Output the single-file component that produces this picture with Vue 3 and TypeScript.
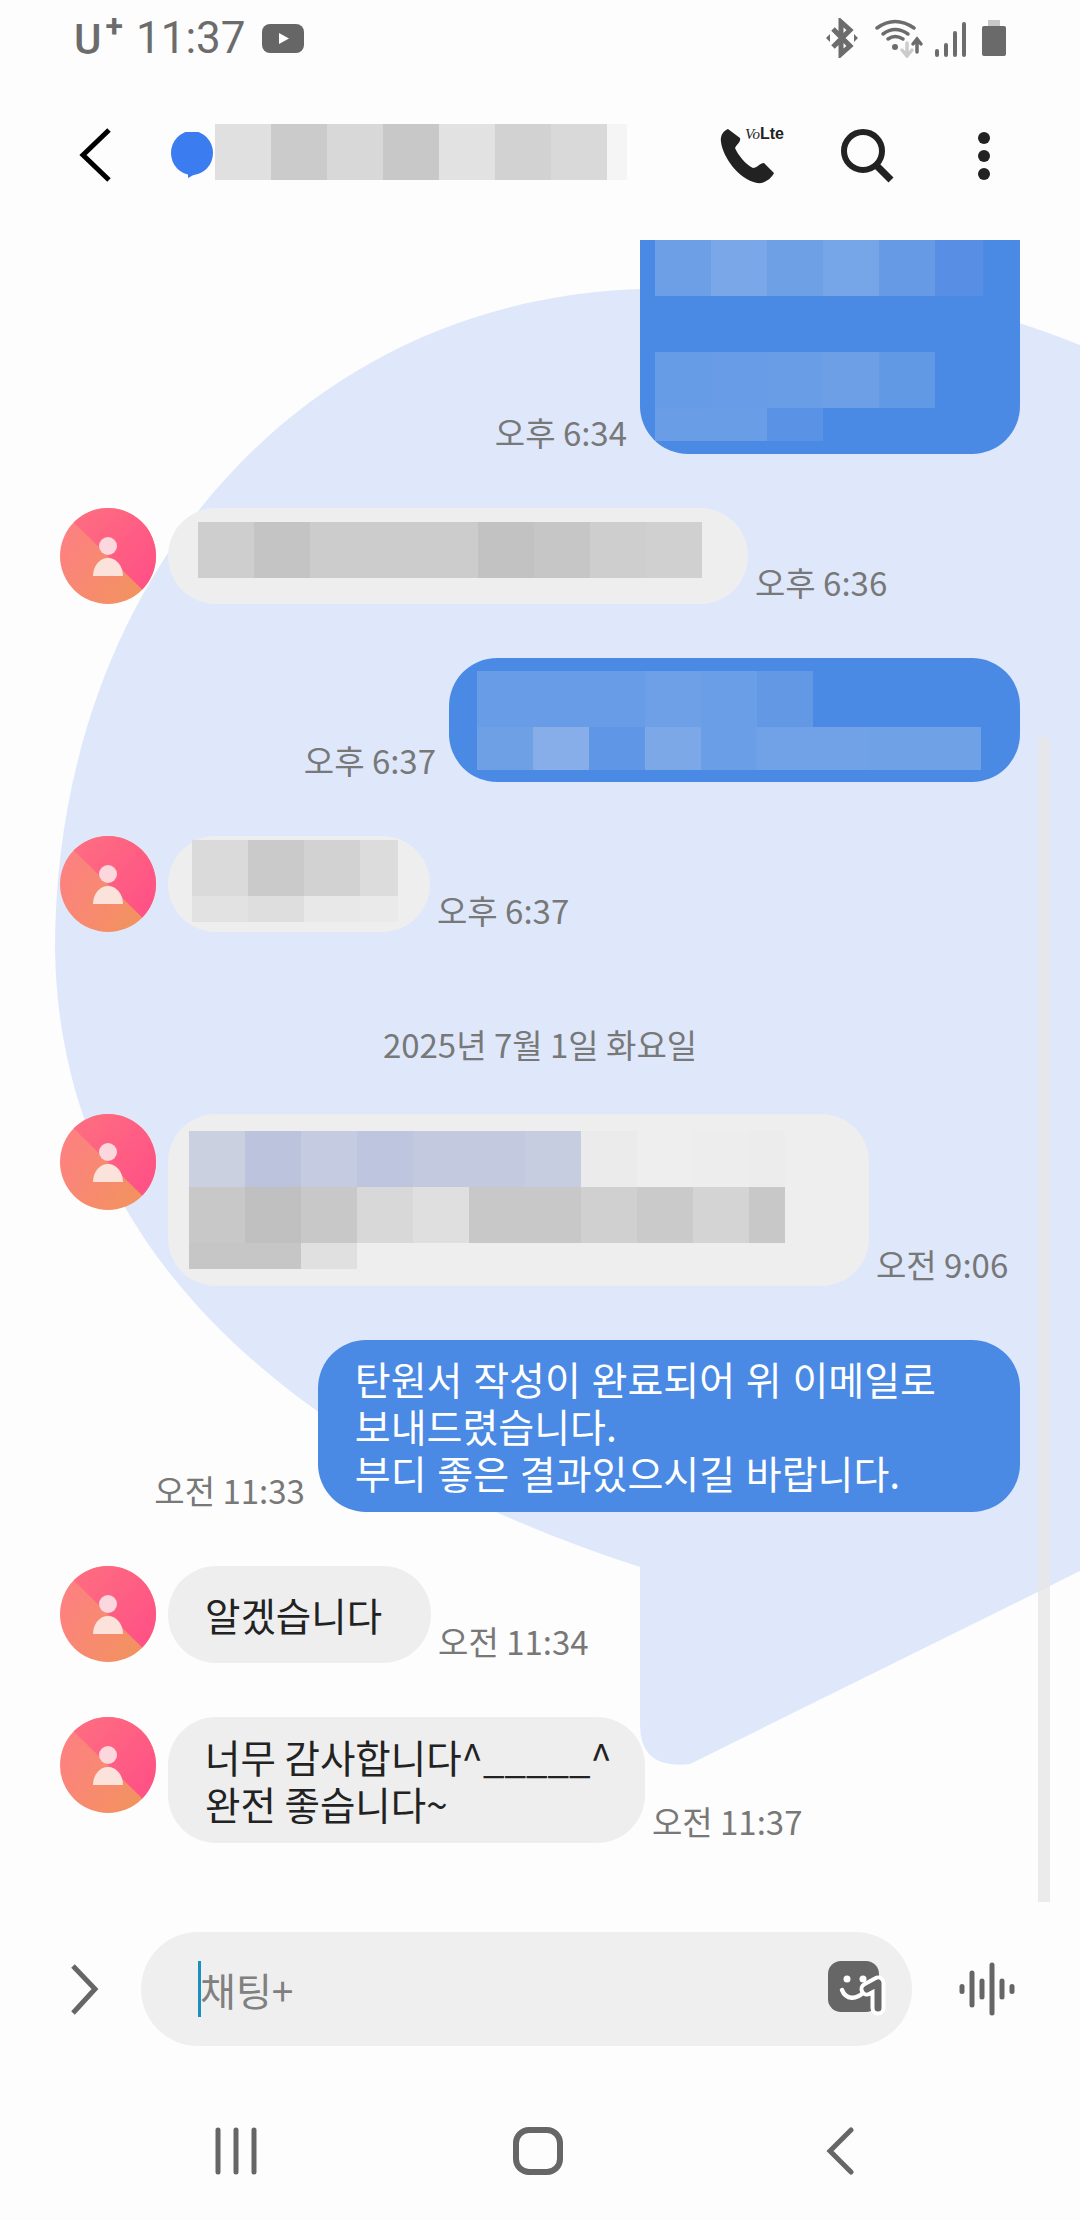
<script setup lang="ts">
type Cell = { c: string; w: number };
type Row = { h: number; cells: Cell[] };
type Msg = {
  side: "in" | "out";
  time: string;
  pad?: number[];
  rows?: Row[];
  text?: string;
  cls?: string;
};

// 모자이크 한 줄: 칸은 56px, 마지막 칸만 폭이 다를 수 있음
function row(h: number, colors: string[], lastW = 56): Row {
  return {
    h,
    cells: colors.map((c, i) => ({ c, w: i === colors.length - 1 ? lastW : 56 })),
  };
}

const titleCells = row(56, ["#e0e0e0", "#cbcbcb", "#d8d8d8", "#c8c8c8", "#e2e2e2", "#d2d2d2", "#d9d9d9", "#f5f5f5"], 20);

const messages: Msg[] = [
  {
    side: "out",
    time: "오후 6:34",
    cls: "first",
    pad: [60, 37, 13, 15],
    rows: [
      row(56, ["#6d9fe6", "#7aa7e7", "#6ea0e6", "#76a6e7", "#679ae5", "#588fe4"], 48),
      row(56, ["#4a8ae4"]),
      row(56, ["#669be6", "#689ce6", "#699de6", "#6d9fe6", "#6299e5"]),
      row(33, ["#699de6", "#699de6", "#5a93e5"]),
    ],
  },
  {
    side: "in",
    time: "오후 6:36",
    pad: [14, 46, 26, 30],
    rows: [row(56, ["#cecece", "#c4c4c4", "#cccccc", "#cccccc", "#cccccc", "#c2c2c2", "#c6c6c6", "#cecece", "#d0d0d0"])],
  },
  {
    side: "out",
    time: "오후 6:37",
    pad: [13, 39, 12, 28],
    rows: [
      row(56, ["#689ce6", "#689ce6", "#689ce6", "#6ea0e7", "#6a9ee6", "#6398e5"]),
      row(43, ["#6ea0e6", "#87aee9", "#5f96e6", "#7ca8e8", "#6a9ee6", "#71a2e7", "#71a2e7", "#6fa1e7", "#6fa1e7"]),
    ],
  },
  {
    side: "in",
    time: "오후 6:37",
    pad: [4, 32, 10, 24],
    rows: [
      row(56, ["#dadada", "#cacaca", "#d2d2d2", "#dcdcdc"], 38),
      row(26, ["#e2e2e2", "#dedede", "#e8e8e8", "#eaeaea"], 38),
    ],
  },
];

const laterMessages: Msg[] = [
  {
    side: "in",
    time: "오전 9:06",
    pad: [17, 84, 17, 21],
    rows: [
      row(56, ["#cbd0e0", "#bcc3dd", "#c5cbe0", "#bdc5df", "#c3cae0", "#c3cae0", "#c6cde0", "#ebebeb", "#eeeeee", "#ededed", "#ececec"], 36),
      row(56, ["#c8c8c8", "#c0c0c0", "#c8c8c8", "#d8d8d8", "#dfdfdf", "#c8c8c8", "#c8c8c8", "#d0d0d0", "#cacaca", "#d4d4d4", "#c8c8c8"], 36),
      row(26, ["#c6c6c6", "#c6c6c6", "#e0e0e0"]),
    ],
  },
  {
    side: "out",
    time: "오전 11:33",
    pad: [15, 84, 16, 37],
    text: "탄원서 작성이 완료되어 위 이메일로\n보내드렸습니다.\n부디 좋은 결과있으시길 바랍니다.",
  },
  { side: "in", time: "오전 11:34", pad: [25, 49, 25, 37], text: "알겠습니다" },
  {
    side: "in",
    time: "오전 11:37",
    pad: [16, 33, 16, 37],
    text: "너무 감사합니다^_____^\n완전 좋습니다~",
  },
];

const voiceBars = [
  { x: 3, h: 10 },
  { x: 13, h: 37 },
  { x: 23, h: 21 },
  { x: 33, h: 53 },
  { x: 43, h: 21 },
  { x: 53, h: 10 },
];

function padStyle(m: Msg) {
  const p = m.pad ?? [0, 0, 0, 0];
  return { padding: `${p[0]}px ${p[1]}px ${p[2]}px ${p[3]}px` };
}
</script>

<template>
  <div class="screen">
    <!-- 채팅 뒤의 말풍선 모양 배경 -->
    <svg class="backdrop" width="1080" height="2220" viewBox="0 0 1080 2220">
      <path
        d="M55 950 C55 580 300 300 640 289 C720 272 900 272 1080 345 L1080 1571 L690 1764 Q640 1770 640 1725 L640 1567 C340 1470 60 1280 55 950 Z"
        fill="#dfe8fb"
      />
    </svg>
    <div class="scrollbar"></div>

    <header class="status">
      <span class="carrier">U<b>+</b></span>
      <span class="clock">11:37</span>
      <svg class="yt" width="42" height="29" viewBox="0 0 42 29">
        <rect width="42" height="29" rx="8" fill="#666" />
        <path d="M17 9 L27 14.500 L17 20 Z" fill="#fff" />
      </svg>
      <div class="status-right">
        <svg width="34" height="40" viewBox="0 0 34 40" fill="none" stroke="#6c6c6c" stroke-width="5">
          <path d="M8 11 L25 28 L16 36 V4 L25 12 L8 29" />
          <path d="M1 20 L5 16 V24 Z M33 20 L29 16 V24 Z" fill="#6c6c6c" stroke="none" />
        </svg>
        <svg class="wifi" width="49" height="40" viewBox="0 0 49 40" fill="none" stroke="#6c6c6c" stroke-linecap="round">
          <path d="M2 10 Q20 -3 39 10" stroke-width="3.500" />
          <path d="M8 16 Q20 7 33 16" stroke-width="3.500" />
          <path d="M13 21 Q20 16 28 21" stroke-width="3.500" />
          <circle cx="20" cy="29" r="3" fill="#6c6c6c" stroke="none" />
          <path d="M32 25 V37 M27 32 L32 38 L37 32" stroke="#cccccc" stroke-width="3.500" />
          <path d="M42 21 V34 M38 26 L42 21 L46 26" stroke-width="3.500" />
        </svg>
        <svg class="signal" width="32" height="40" viewBox="0 0 32 40" fill="none" stroke="#6c6c6c" stroke-width="4" stroke-linecap="round">
          <path d="M2 33 V37 M11 27 V37 M20 15 V37 M29 6 V37" />
        </svg>
        <svg class="battery" width="24" height="40" viewBox="0 0 24 40">
          <rect x="6" y="2" width="12" height="7" fill="#c8c8c8" />
          <rect y="8" width="24" height="30" rx="2" fill="#6a6a6a" />
        </svg>
      </div>
    </header>

    <div class="appbar">
      <svg class="back" width="36" height="56" viewBox="0 0 36 56" fill="none" stroke="#000" stroke-width="5">
        <path d="M31 3 L5 28 L31 53" />
      </svg>
      <svg class="dot" width="44" height="46" viewBox="0 0 44 46">
        <ellipse cx="21" cy="21" rx="21" ry="22" fill="#3b7cf0" />
        <path d="M17 40 L17 46 L30 39 Z" fill="#3b7cf0" />
      </svg>
      <div class="mosaic-row">
        <i v-for="(cell, i) in titleCells.cells" :key="i" :style="{ width: cell.w + 'px', height: titleCells.h + 'px', background: cell.c }"></i>
      </div>
      <div class="call">
        <svg width="60" height="60" viewBox="0 0 60 60">
          <path
            d="M10 2 C5 4 2 9 3 15 C5 30 20 52 39 56 C46 57 53 52 56 46 L46 36 C42 36 39 41 35 41 C28 38 20 28 17 21 C19 17 23 15 22 11 Z"
            fill="#222"
          />
        </svg>
        <span class="volte"><em>Vo</em><b>Lte</b></span>
      </div>
      <svg class="search" width="60" height="64" viewBox="0 0 60 64" fill="none" stroke="#222" stroke-width="6">
        <circle cx="26" cy="24" r="19" />
        <path d="M39 38 L54 53" stroke-width="7" />
      </svg>
      <svg class="more" width="14" height="50" viewBox="0 0 14 50" fill="#222">
        <circle cx="7" cy="7" r="6" />
        <circle cx="7" cy="25" r="6" />
        <circle cx="7" cy="43" r="6" />
      </svg>
    </div>

    <main class="list">
      <template v-for="(group, g) in [messages, laterMessages]" :key="g">
        <div v-if="g === 1" class="date">2025년 7월 1일 화요일</div>
        <div v-for="(m, i) in group" :key="i" class="msg" :class="[m.side, m.cls]">
          <svg v-if="m.side === 'in'" class="avatar" width="96" height="96" viewBox="0 0 96 96">
            <defs>
              <linearGradient id="avTop" x1="0.1" y1="0" x2="1" y2="0.8">
                <stop offset="0" stop-color="#fe7080" />
                <stop offset="1" stop-color="#ff4f86" />
              </linearGradient>
              <linearGradient id="avBottom" x1="0" y1="0.2" x2="1" y2="0.9">
                <stop offset="0" stop-color="#fe7f84" />
                <stop offset="1" stop-color="#f0955a" />
              </linearGradient>
              <clipPath id="avClip"><circle cx="48" cy="48" r="48" /></clipPath>
            </defs>
            <g clip-path="url(#avClip)">
              <rect width="96" height="96" fill="url(#avBottom)" />
              <path d="M0 1 L96 95 V0 H0 Z" fill="url(#avTop)" />
            </g>
            <circle cx="48" cy="38" r="9" fill="#fcd7de" />
            <path d="M33 68 A15 18 0 0 1 63 68 Z" fill="#fbe3dc" />
          </svg>
          <span v-if="m.side === 'out'" class="time">{{ m.time }}</span>
          <div class="bubble" :style="padStyle(m)">
            <template v-if="m.rows">
              <div v-for="(r, ri) in m.rows" :key="ri" class="mosaic-row">
                <i v-for="(cell, ci) in r.cells" :key="ci" :style="{ width: cell.w + 'px', height: r.h + 'px', background: cell.c }"></i>
              </div>
            </template>
            <template v-else>{{ m.text }}</template>
          </div>
          <span v-if="m.side === 'in'" class="time">{{ m.time }}</span>
        </div>
      </template>
    </main>

    <div class="composer">
      <svg class="expand" width="48" height="56" viewBox="0 0 48 56" fill="none" stroke="#666" stroke-width="5">
        <path d="M13 5 L35 28 L13 52" />
      </svg>
      <div class="input">
        <span class="caret"></span>
        <span class="placeholder">채팅+</span>
        <svg class="sticker" width="60" height="60" viewBox="0 0 60 60">
          <rect width="51" height="51" rx="13" fill="#666" />
          <circle cx="19" cy="18" r="3.500" fill="#fff" />
          <circle cx="35" cy="18" r="3.500" fill="#fff" />
          <path d="M14 29 C18 39 28 39 36 31" fill="none" stroke="#fff" stroke-width="4.500" stroke-linecap="round" />
          <path d="M39 28 L50 22 V47" fill="none" stroke="#fff" stroke-width="15" stroke-linecap="round" stroke-linejoin="round" />
          <path d="M39 28 L50 22 V47" fill="none" stroke="#666" stroke-width="7" stroke-linecap="round" stroke-linejoin="round" />
        </svg>
      </div>
      <svg class="voice" width="56" height="56" viewBox="0 0 56 56">
        <rect v-for="b in voiceBars" :key="b.x" :x="b.x - 2.5" :y="28 - b.h / 2" width="5" :height="b.h" rx="2.500" fill="#666" />
      </svg>
    </div>

    <nav class="navbar">
      <svg width="60" height="48" viewBox="0 0 60 48" fill="none" stroke="#666" stroke-width="5" stroke-linecap="round">
        <path d="M12 3 V45 M30 3 V45 M48 3 V45" />
      </svg>
      <svg width="60" height="48" viewBox="0 0 60 48" fill="none" stroke="#666" stroke-width="6">
        <rect x="8" y="3" width="44" height="42" rx="13" />
      </svg>
      <svg width="60" height="48" viewBox="0 0 60 48" fill="none" stroke="#666" stroke-width="5" stroke-linecap="round">
        <path d="M41 3 L20 24 L41 45" />
      </svg>
    </nav>
  </div>
</template>

<style scoped>
.screen {
  position: relative;
  width: 1080px;
  height: 2220px;
  overflow: hidden;
  background: #fdfdfd;
  display: flex;
  flex-direction: column;
  font-family: "Noto Sans CJK KR", Roboto, sans-serif;
}
.backdrop {
  position: absolute;
  left: 0;
  top: 0;
}
.scrollbar {
  position: absolute;
  left: 1038px;
  top: 737px;
  width: 12px;
  height: 1165px;
  border-radius: 6px 6px 0 0;
  background: rgba(230, 230, 230, 0.8);
}
.status {
  position: relative;
  height: 76px;
  padding: 0 74px;
  display: flex;
  align-items: center;
  color: #6c6c6c;
  font-family: Roboto, sans-serif;
}
.carrier {
  font-size: 42px;
  font-weight: 500;
  width: 62px;
  display: flex;
  align-items: flex-start;
  line-height: 40px;
  padding-top: 4px;
}
.carrier b {
  font-size: 32px;
  line-height: 28px;
  margin: -8px 0 0 4px;
}
.clock {
  font-size: 44px;
  line-height: 50px;
}
.yt {
  margin-left: 16px;
}
.status-right {
  margin-left: auto;
  display: flex;
  align-items: center;
}
.wifi {
  margin-left: 16px;
}
.signal {
  margin-left: 11px;
}
.battery {
  margin-left: 15px;
}
.appbar {
  position: relative;
  height: 164px;
  box-sizing: border-box;
  display: flex;
  align-items: center;
  padding: 0 0 12px 78px;
}
.back {
  flex: none;
  margin-top: 6px;
}
.dot {
  margin-left: 57px;
  margin-top: 5px;
}
.mosaic-row {
  display: flex;
}
.mosaic-row i {
  display: block;
  flex: none;
}
.call {
  position: relative;
  margin-left: 91px;
  margin-top: 10px;
  width: 60px;
  height: 60px;
}
.volte {
  position: absolute;
  left: 27px;
  top: -3px;
  font-size: 15px;
  line-height: 18px;
  white-space: nowrap;
  color: #222;
}
.volte em {
  font-family: "Liberation Serif", serif;
}
.volte b {
  font-family: "Liberation Sans", sans-serif;
  font-size: 16px;
}
.search {
  margin-left: 59px;
  margin-top: 14px;
}
.more {
  margin-left: 80px;
  margin-top: 8px;
}
.list {
  position: relative;
  flex: 1;
  min-height: 0;
  overflow: hidden;
  padding: 0 60px;
  display: flex;
  flex-direction: column;
  gap: 54px;
}
.msg {
  display: flex;
  align-items: flex-end;
  flex: none;
}
.msg.out {
  justify-content: flex-end;
  gap: 13px;
}
.msg.in {
  gap: 12px;
}
.msg.first {
  margin-top: -60px;
}
.avatar {
  flex: none;
  align-self: flex-start;
}
.bubble {
  border-radius: 48px;
  font-size: 38.5px;
  line-height: 47px;
  white-space: pre-line;
  flex: none;
}
.msg.out .bubble {
  background: #4a8ae4;
  color: #fff;
  font-size: 39px;
  word-spacing: 2px;
}
.msg.in .bubble {
  background: #eeeeee;
  color: #222;
}
.msg.in .time {
  margin-left: -5px;
}
.time {
  font-size: 33px;
  line-height: 44px;
  color: #787878;
  white-space: nowrap;
}
.date {
  text-align: center;
  font-size: 33px;
  line-height: 44px;
  color: #787878;
  margin: 36px 0 -6px;
}
.composer {
  position: relative;
  height: 114px;
  padding-left: 60px;
  display: flex;
  align-items: center;
}
.expand {
  flex: none;
}
.input {
  margin-left: 33px;
  width: 771px;
  height: 114px;
  border-radius: 57px;
  background: #efefef;
  display: flex;
  align-items: center;
  padding: 0 24px 0 57px;
  box-sizing: border-box;
}
.caret {
  flex: none;
  width: 3px;
  height: 56px;
  background: #1a8fc0;
}
.placeholder {
  margin-left: -1px;
  font-size: 39px;
  color: #808080;
}
.sticker {
  margin-left: auto;
  margin-top: 4px;
}
.voice {
  margin-left: 47px;
}
.navbar {
  position: relative;
  height: 174px;
  padding: 81px 0 0 206px;
  box-sizing: border-box;
  display: flex;
  align-items: flex-start;
  gap: 242px;
}
</style>

<style>
html,
body {
  margin: 0;
  background: #fdfdfd;
}
</style>
